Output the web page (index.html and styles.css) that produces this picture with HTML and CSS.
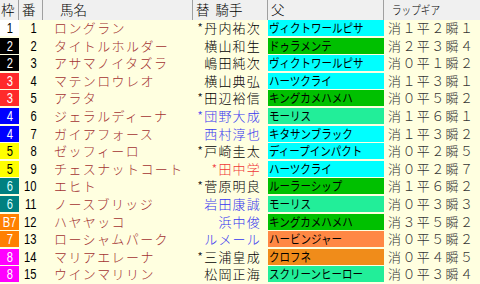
FILE: index.html
```html
<!DOCTYPE html>
<html lang="ja">
<head>
<meta charset="utf-8">
<link rel="stylesheet" href="styles.css">
</head>
<body>
<div class="table">
  <div class="row head">
    <div class="h h-frame">枠</div>
    <div class="h h-num">番</div>
    <div class="h h-name">馬名</div>
    <div class="h h-jockey">替 &nbsp;騎手</div>
    <div class="h h-sire">父</div>
    <div class="h h-lap"><span class="narrow">ラップギア</span></div>
  </div>

  <div class="row"><div class="frame f1"><span class="d">1</span></div><div class="num"><span class="d">1</span></div><div class="name">ロングラン</div><div class="jockey">*丹内祐次</div><div class="sire cyan"><span class="narrow">ヴィクトワールピサ</span></div><div class="lap">消１平２瞬１</div></div>
  <div class="row"><div class="frame f2"><span class="d">2</span></div><div class="num"><span class="d">2</span></div><div class="name">タイトルホルダー</div><div class="jockey">横山和生</div><div class="sire green"><span class="narrow">ドゥラメンテ</span></div><div class="lap">消２平３瞬４</div></div>
  <div class="row"><div class="frame f2"><span class="d">2</span></div><div class="num"><span class="d">3</span></div><div class="name">アサマノイタズラ</div><div class="jockey">嶋田純次</div><div class="sire cyan"><span class="narrow">ヴィクトワールピサ</span></div><div class="lap">消０平１瞬２</div></div>
  <div class="row"><div class="frame f3"><span class="d">3</span></div><div class="num"><span class="d">4</span></div><div class="name">マテンロウレオ</div><div class="jockey">横山典弘</div><div class="sire cyan"><span class="narrow">ハーツクライ</span></div><div class="lap">消１平３瞬１</div></div>
  <div class="row"><div class="frame f3"><span class="d">3</span></div><div class="num"><span class="d">5</span></div><div class="name">アラタ</div><div class="jockey">*田辺裕信</div><div class="sire green"><span class="narrow">キングカメハメハ</span></div><div class="lap">消０平５瞬２</div></div>
  <div class="row"><div class="frame f4"><span class="d">4</span></div><div class="num"><span class="d">6</span></div><div class="name">ジェラルディーナ</div><div class="jockey blue">*団野大成</div><div class="sire spring"><span class="narrow">モーリス</span></div><div class="lap">消１平６瞬１</div></div>
  <div class="row"><div class="frame f4"><span class="d">4</span></div><div class="num"><span class="d">7</span></div><div class="name">ガイアフォース</div><div class="jockey blue">西村淳也</div><div class="sire cyan"><span class="narrow">キタサンブラック</span></div><div class="lap">消１平３瞬２</div></div>
  <div class="row"><div class="frame f5"><span class="d">5</span></div><div class="num"><span class="d">8</span></div><div class="name">ゼッフィーロ</div><div class="jockey">*戸崎圭太</div><div class="sire cyan"><span class="narrow">ディープインパクト</span></div><div class="lap">消０平２瞬５</div></div>
  <div class="row"><div class="frame f5"><span class="d">5</span></div><div class="num"><span class="d">9</span></div><div class="name">チェスナットコート</div><div class="jockey red">*田中学</div><div class="sire cyan"><span class="narrow">ハーツクライ</span></div><div class="lap">消０平２瞬７</div></div>
  <div class="row"><div class="frame f6"><span class="d">6</span></div><div class="num"><span class="d">10</span></div><div class="name">エヒト</div><div class="jockey">*菅原明良</div><div class="sire green"><span class="narrow">ルーラーシップ</span></div><div class="lap">消１平６瞬２</div></div>
  <div class="row"><div class="frame f6"><span class="d">6</span></div><div class="num"><span class="d">11</span></div><div class="name">ノースブリッジ</div><div class="jockey blue">岩田康誠</div><div class="sire spring"><span class="narrow">モーリス</span></div><div class="lap">消０平３瞬３</div></div>
  <div class="row"><div class="frame f7"><span class="d">B7</span></div><div class="num"><span class="d">12</span></div><div class="name">ハヤヤッコ</div><div class="jockey blue">浜中俊</div><div class="sire green"><span class="narrow">キングカメハメハ</span></div><div class="lap">消３平５瞬２</div></div>
  <div class="row"><div class="frame f7"><span class="d">7</span></div><div class="num"><span class="d">13</span></div><div class="name">ローシャムパーク</div><div class="jockey blue">ルメール</div><div class="sire salmon"><span class="narrow">ハービンジャー</span></div><div class="lap">消０平５瞬２</div></div>
  <div class="row"><div class="frame f8"><span class="d">8</span></div><div class="num"><span class="d">14</span></div><div class="name">マリアエレーナ</div><div class="jockey">*三浦皇成</div><div class="sire orange"><span class="narrow">クロフネ</span></div><div class="lap">消０平４瞬５</div></div>
  <div class="row"><div class="frame f8"><span class="d">8</span></div><div class="num"><span class="d">15</span></div><div class="name">ウインマリリン</div><div class="jockey">松岡正海</div><div class="sire spring"><span class="narrow">スクリーンヒーロー</span></div><div class="lap">消０平３瞬４</div></div>
</div>
</body>
</html>
```
FILE: styles.css
```css
html, body {
  margin: 0;
  padding: 0;
  background: #ffffe0;
}
.table {
  width: 480px;
  font-family: "Noto Sans CJK JP", sans-serif;
  font-size: 13px;
  font-weight: 300;
  color: #000;
}
.row {
  display: grid;
  grid-template-columns: 19px 24px 150px 75px 116px 96px;
  height: 17.6px;
}
.row.head {
  height: 20px;
  background: #f0f0f0;
}
.h {
  height: 20px;
  line-height: 19px;
  font-size: 13.5px;
  border-right: 1px solid #a0a0a0;
  box-sizing: border-box;
  white-space: nowrap;
}
.h-frame { padding-left: 1px; }
.h-num { padding-left: 3px; }
.h-name { padding-left: 17px; }
.h-jockey { padding-left: 3px; }
.h-sire { padding-left: 3px; }
.h-lap { padding-left: 8px; border-right: none; }

.frame, .sire {
  height: 16px;
  line-height: 16px;
  white-space: nowrap;
}
.name, .jockey, .lap, .num {
  height: 16px;
  line-height: 16px;
  white-space: nowrap;
  letter-spacing: 1.4px;
}
.frame {
  text-align: center;
  color: #fff;
}
.d {
  display: inline-block;
  font-family: "Liberation Sans", sans-serif;
  font-size: 14px;
  font-weight: 400;
  transform: scaleX(0.8);
  letter-spacing: 0;
}
.f1 { background: #ffffff; color: #000; }
.f2 { background: #000000; }
.f3 { background: #ff2a2a; }
.f4 { background: #0000ff; }
.f5 { background: #ffff00; color: #000; }
.f6 { background: #008080; color: #d8ffff; }
.f7 { background: #ff8000; }
.f8 { background: #ff00ff; }

.num {
  text-align: right;
  padding-right: 6px;
  letter-spacing: 0;
}
.num .d { transform-origin: right center; }
.name {
  padding-left: 11px;
  color: #a33232;
}
.jockey {
  text-align: right;
  padding-right: 7px;
  letter-spacing: 1.2px;
}
.jockey.blue { color: #3838f0; }
.jockey.red { color: #f03838; }

.sire {
  padding-left: 1px;
  font-size: 12px;
  font-weight: 400;
}
.narrow {
  display: inline-block;
  transform: scaleX(0.875);
  transform-origin: left center;
}
.h-lap .narrow {
  transform: scaleX(0.8);
  font-size: 12px;
}
.cyan { background: #00ffff; }
.green { background: #00c000; }
.spring { background: #22ee99; }
.salmon { background: #ff8844; }
.orange { background: #f08c1a; }

.lap {
  padding-left: 4px;
  color: #333;
}
```
